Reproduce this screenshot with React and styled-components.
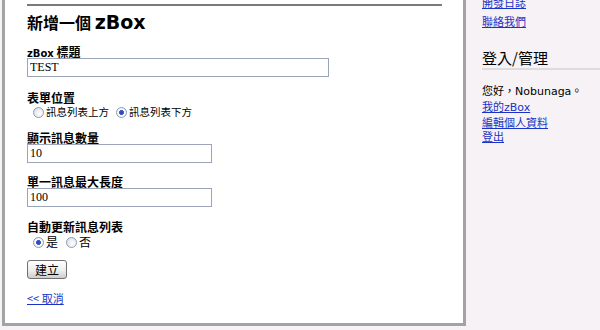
import React from 'react'
import styled, { createGlobalStyle } from 'styled-components'

const GlobalStyle = createGlobalStyle`
  html, body {
    margin: 0;
    padding: 0;
    background: #f6f2f6;
    overflow: hidden;
  }
  body {
    font-family: Verdana, "DejaVu Sans", "Noto Sans CJK TC", sans-serif;
    font-size: 12px;
    color: #000;
  }
`

const Page = styled.div`
  display: flex;
  align-items: flex-start;
  width: 600px;
  height: 330px;
`

const Main = styled.div`
  margin-left: 2px;
  width: 436px;
  height: 323px;
  padding: 0 0 0 22px;
  background: #fff;
  border: 3px solid #a3a3a3;
  border-top: 0;
  box-sizing: content-box;
`

const TopRule = styled.div`
  margin-top: 4px;
  width: 415px;
  height: 2px;
  background: #7a7a7a;
`

const Title = styled.h2`
  margin: 5px 0 0;
  height: 22px;
  font-size: 16px;
  line-height: 22px;
  font-weight: bold;
  font-family: "Noto Sans CJK TC", sans-serif;
`

const Latin = styled.span`
  font-family: Verdana, "DejaVu Sans", sans-serif;
  font-size: ${(p) => p.$size}px;
`

const Field = styled.div`
  margin-top: ${(p) => p.$top || 12}px;
`

const Label = styled.div`
  height: 13px;
  font-weight: bold;
  font-size: 12px;
  line-height: 13px;
  font-family: "Noto Sans CJK TC", sans-serif;
`

const TextInput = styled.input`
  display: block;
  box-sizing: border-box;
  width: ${(p) => p.$w}px;
  height: 19px;
  margin: 0;
  padding: 1px 2px;
  border: 1px solid #9aa6b8;
  font-family: "Liberation Serif", "Times New Roman", serif;
  font-size: 12px;
  color: #000;
  outline: none;
`

const RadioRow = styled.div`
  display: flex;
  align-items: center;
  gap: ${(p) => p.$gap || 7}px;
  padding-left: 6px;
  margin-top: ${(p) => p.$top || 1}px;
  height: 14px;
`

const RadioLabel = styled.label`
  display: flex;
  align-items: center;
  gap: 2px;
  height: 14px;
  font-family: "Noto Sans CJK TC", sans-serif;
  font-size: ${(p) => (p.$big ? 12 : 10.5)}px;
  line-height: 14px;
`

const Radio = styled.input`
  appearance: none;
  box-sizing: border-box;
  flex: none;
  width: 11px;
  height: 11px;
  margin: 0;
  border: 1px solid #8b9cb3;
  border-radius: 50%;
  background: radial-gradient(circle at 65% 65%, #ffffff 0, #e6e9ee 60%, #c9cfd8 100%);

  &:checked {
    background: radial-gradient(circle, #2c44b4 0, #3b5ccc 2.2px, #ffffff 2.8px, #dde2ea 100%);
  }
`

const Button = styled.button`
  display: block;
  margin-top: 11px;
  width: 40px;
  height: 19px;
  padding: 0;
  border: 1px solid #707070;
  border-radius: 3px;
  background: linear-gradient(#ffffff, #eeeeee 55%, #cdcdcd);
  font-family: "Noto Sans CJK TC", sans-serif;
  font-size: 12px;
  line-height: 15px;
  color: #000;
`

const Link = styled.a`
  color: #1a33c4;
  text-decoration: underline;
  cursor: pointer;
`

const CancelRow = styled.div`
  margin-top: 12px;
  height: 14px;
  font-family: "Noto Sans CJK TC", sans-serif;
  font-size: 11px;
  line-height: 14px;
`

const Side = styled.div`
  flex: 1;
  padding-left: 16px;
`

const LinkList = styled.div`
  display: flex;
  flex-direction: column;
  align-items: flex-start;
  gap: ${(p) => p.$gap || 0}px;
  margin-top: ${(p) => p.$top || 0}px;
  font-family: "Noto Sans CJK TC", sans-serif;
  font-size: 11px;
  line-height: 14.3px;
`

const Greeting = styled.span`
  color: #000;
`

const SideTitle = styled.h3`
  margin: 20px 0 0;
  height: 18px;
  font-family: "Noto Sans CJK TC", sans-serif;
  font-size: 15px;
  line-height: 18px;
  font-weight: normal;
  padding-bottom: 1px;
  border-bottom: 2px solid #dcdcdc;
`

const App = () => {
  return (
    <Page>
      <GlobalStyle />
      <Main>
        <TopRule />
        <Title>
          新增一個 <Latin $size={19}>zBox</Latin>
        </Title>

        <Field $top={12}>
          <Label>
            <Latin $size={10}>zBox</Latin> 標題
          </Label>
          <TextInput $w={302} defaultValue="TEST" />
        </Field>

        <Field $top={14}>
          <Label>表單位置</Label>
          <RadioRow>
            <RadioLabel>
              <Radio type="radio" name="pos" />
              訊息列表上方
            </RadioLabel>
            <RadioLabel>
              <Radio type="radio" name="pos" defaultChecked />
              訊息列表下方
            </RadioLabel>
          </RadioRow>
        </Field>

        <Field>
          <Label>顯示訊息數量</Label>
          <TextInput $w={185} defaultValue="10" />
        </Field>

        <Field>
          <Label>單一訊息最大長度</Label>
          <TextInput $w={185} defaultValue="100" />
        </Field>

        <Field $top={13}>
          <Label>自動更新訊息列表</Label>
          <RadioRow $top={2} $gap={8}>
            <RadioLabel $big>
              <Radio type="radio" name="auto" defaultChecked />是
            </RadioLabel>
            <RadioLabel $big>
              <Radio type="radio" name="auto" />否
            </RadioLabel>
          </RadioRow>
        </Field>

        <Button>建立</Button>

        <CancelRow>
          <Link>&lt;&lt; 取消</Link>
        </CancelRow>
      </Main>

      <Side>
        <LinkList $top={-5} $gap={5}>
          <Link>開發日誌</Link>
          <Link>聯絡我們</Link>
        </LinkList>

        <SideTitle>登入/管理</SideTitle>

        <LinkList $top={13}>
          <Greeting>
            您好，<Latin $size={11}>Nobunaga</Latin>。
          </Greeting>
          <Link>我的<Latin $size={11}>zBox</Latin></Link>
          <Link>編輯個人資料</Link>
          <Link>登出</Link>
        </LinkList>
      </Side>
    </Page>
  )
}

export default App
